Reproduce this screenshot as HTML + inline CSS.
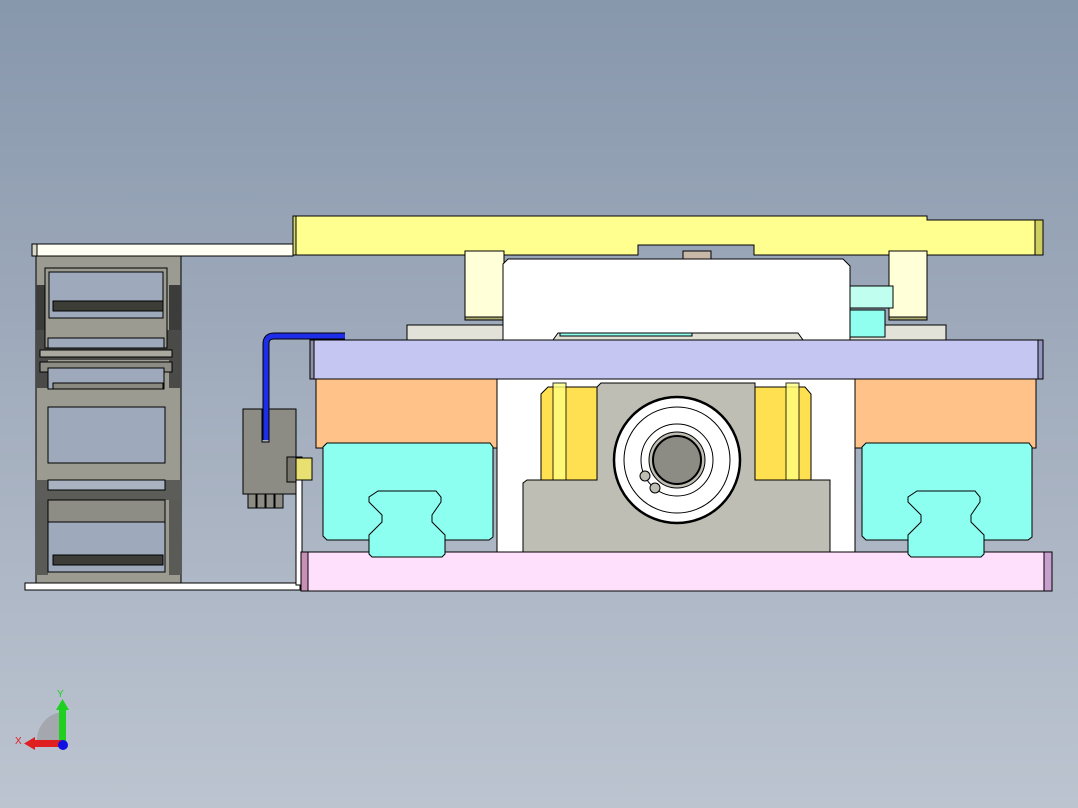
<!DOCTYPE html>
<html><head><meta charset="utf-8"><style>
html,body{margin:0;padding:0;width:1078px;height:808px;overflow:hidden;}
body{background:linear-gradient(#8797ac,#a3aebe 50%,#bcc4d0);font-family:"Liberation Sans",sans-serif;}
svg{position:absolute;left:0;top:0}
</style></head><body>
<svg width="1078" height="808" viewBox="0 0 1078 808" stroke="#000" stroke-width="1">
<!-- chain -->
<rect x="32" y="244" width="261" height="12" fill="#fffff4"/>
<rect x="32" y="244" width="5" height="12" fill="#d8d8c8"/>
<rect x="36" y="256" width="145" height="327" fill="#9c9b92"/>
<rect x="36" y="330" width="145" height="30" fill="#4a4a48" stroke="none"/>
<rect x="36" y="285" width="12" height="45" fill="#3c3c3a" stroke="none"/>
<rect x="169" y="285" width="12" height="45" fill="#3c3c3a" stroke="none"/>
<rect x="36" y="360" width="12" height="28" fill="#4a4a48" stroke="none"/>
<rect x="169" y="360" width="12" height="28" fill="#4a4a48" stroke="none"/>
<rect x="36" y="480" width="145" height="20" fill="#5c5c58" stroke="none"/>
<rect x="36" y="500" width="12" height="75" fill="#5a5a56" stroke="none"/>
<rect x="169" y="500" width="12" height="75" fill="#5a5a56" stroke="none"/>
<rect x="45" y="268" width="122" height="80" fill="#9c9b92"/>
<rect x="49" y="272" width="114" height="46" fill="#9eaabb"/>
<rect x="53" y="301" width="110" height="10" fill="#3d3d38"/>
<rect x="40" y="350" width="132" height="7" fill="#aaa99f"/>
<rect x="48" y="338" width="116" height="10" fill="#9eaabb"/>
<rect x="40" y="362" width="132" height="10" fill="#8e8d85"/>
<rect x="48" y="368" width="116" height="21" fill="#9eaabb"/>
<rect x="53" y="383" width="110" height="6" fill="#8a8980"/>
<rect x="48" y="407" width="117" height="56" fill="#9eaabb"/>
<rect x="48" y="480" width="117" height="10" fill="#a8b2c0"/>
<rect x="48" y="500" width="117" height="23" fill="#8e8d85"/>
<rect x="48" y="522" width="117" height="50" fill="#9eaabb"/>
<rect x="53" y="555" width="110" height="10" fill="#3d3d38"/>
<rect x="25" y="583" width="275" height="7" fill="#fff"/>
<!-- connector -->
<rect x="296" y="457" width="6" height="128" fill="#fff"/>
<path d="M243 409 H262 V442 H269 V409 H296 V494 H243 Z" fill="#8c8b84"/>
<rect x="287" y="457" width="9" height="25" fill="#77766f"/>
<rect x="296" y="458" width="16" height="22" fill="#e8e070"/>
<path d="M248 494h8v14h-8zM257 494h8v14h-8zM266 494h8v14h-8zM275 494h8v14h-8z" fill="#8c8b84"/>
<path d="M266 440 V344 Q266 336 274 336 H345" fill="none" stroke="#000" stroke-width="7"/>
<path d="M266 440 V344 Q266 336 274 336 H345" fill="none" stroke="#1e2ee8" stroke-width="5"/>
<!-- yellow top plate -->
<path d="M293 216 H927 V220 H1043 V255 H754 V245 H638 V255 H293 Z" fill="#ffff90"/>
<rect x="293" y="216" width="3" height="39" fill="#d6d670"/>
<rect x="1035" y="220" width="8" height="35" fill="#cfcf60"/>
<rect x="683" y="251" width="28" height="8" fill="#c8b8a8"/>
<rect x="465" y="251" width="39" height="69" fill="#ffffd8"/>
<rect x="465" y="317" width="39" height="3" fill="#a8a870"/>
<rect x="889" y="251" width="38" height="69" fill="#ffffd8"/>
<rect x="889" y="317" width="38" height="3" fill="#a8a870"/>
<!-- rails grey -->
<rect x="407" y="325" width="96" height="15" fill="#e2e2d8"/>
<rect x="850" y="325" width="96" height="15" fill="#e2e2d8"/>
<!-- white block -->
<path d="M508 259 H843 L850 266 V340 H503 V264 Z" fill="#fff"/>
<path d="M553 340 L558 333 H798 L803 340Z" fill="#e0e0d4"/>
<rect x="560" y="333" width="132" height="3" fill="#90ffee"/>
<rect x="850" y="286" width="43" height="22" fill="#c0fff0"/>
<rect x="850" y="310" width="35" height="27" fill="#90fff0"/>
<!-- lavender -->
<rect x="310" y="340" width="733" height="39" fill="#c6c6f2"/>
<rect x="310" y="340" width="4" height="39" fill="#9090a8"/>
<rect x="1038" y="340" width="5" height="39" fill="#9494c0"/>
<!-- middle white -->
<rect x="497" y="379" width="358" height="173" fill="#fff"/>
<!-- yellow sides -->
<path d="M548 387 H597 V480 H541 V394 Z" fill="#ffe050"/>
<rect x="553" y="383" width="13" height="97" fill="#ffff80" opacity=".8"/>
<path d="M755 387 H805 L811 394 V480 H755 Z" fill="#ffe050"/>
<rect x="786" y="383" width="13" height="97" fill="#ffff80" opacity=".8"/>
<!-- housing -->
<path d="M601 383 H755 V480 H830 V552 H523 V483 L527 480 H597 V387 Z" fill="#bebeb5"/>
<circle cx="677" cy="460" r="63" fill="#fff" stroke-width="2.5"/>
<circle cx="677" cy="460" r="53" fill="none"/>
<circle cx="677" cy="460" r="36" fill="#fff"/>
<circle cx="677" cy="460" r="28" fill="#bebeb5"/>
<circle cx="677" cy="460" r="24" fill="#8c8b84" stroke-width="2"/>
<circle cx="645" cy="476" r="5" fill="#bebeb5"/><circle cx="655" cy="488" r="5" fill="#bebeb5"/>
<!-- orange -->
<rect x="316" y="379" width="181" height="69" fill="#ffc38a"/>
<rect x="855" y="379" width="181" height="69" fill="#ffc38a"/>
<!-- pink -->
<rect x="301" y="552" width="751" height="39" fill="#ffe0fc"/>
<rect x="301" y="552" width="7" height="39" fill="#c890b8"/>
<rect x="1044" y="552" width="8" height="39" fill="#c8a0d0"/>
<!-- carriages -->
<path d="M327 443 H490 L493 447 V537 L489 540 H327 L323 536 V447 Z" fill="#8cfff0"/>
<path d="M378 491 H436 L441 497 V502 L432 515 V522 L445 535 V554 L442 557 H372 L369 554 V535 L382 522 V515 L369 502 V497 Z" fill="#8cfff0"/>
<path d="M866 443 H1029 L1032 447 V537 L1028 540 H866 L862 536 V447 Z" fill="#8cfff0"/>
<path d="M917 491 H975 L980 497 V502 L971 515 V522 L984 535 V554 L981 557 H911 L908 554 V535 L921 522 V515 L908 502 V497 Z" fill="#8cfff0"/>
<!-- triad -->
<path d="M63 745 V712 A28 28 0 0 0 37 740 V745 Z" fill="#a4a8ae" stroke="none"/>
<rect x="59" y="708" width="7" height="37" fill="#20d020" stroke="none"/>
<path d="M56 710 L62.5 699 L69 710Z" fill="#20d020" stroke="none"/>
<rect x="33" y="740" width="30" height="7" fill="#e02020" stroke="none"/>
<path d="M35 737 L24 743.5 L35 750Z" fill="#e02020" stroke="none"/>
<circle cx="63" cy="745" r="5" fill="#1010e0" stroke="none"/>
<text x="57" y="697" font-size="10" fill="#20d020" stroke="none">Y</text>
<text x="15" y="744" font-size="10" fill="#e02020" stroke="none">X</text>
</svg>
</body></html>
